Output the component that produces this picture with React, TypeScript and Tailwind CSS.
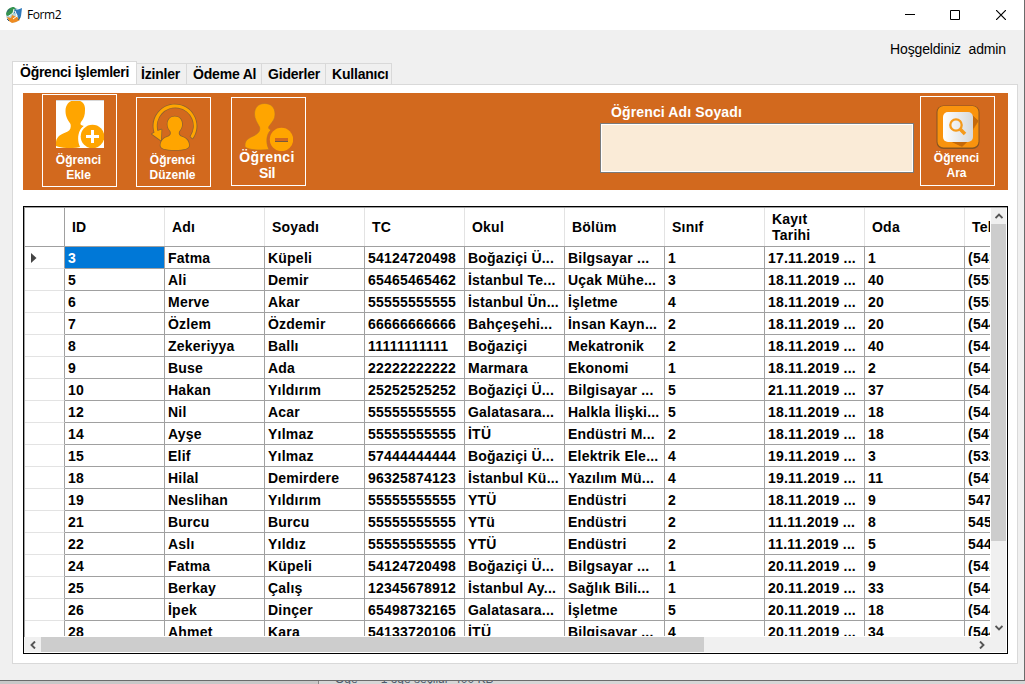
import type { ReactNode } from "react";

const columns = ["ID", "Adı", "Soyadı", "TC", "Okul", "Bölüm", "Sınıf", "Kayıt Tarihi", "Oda", "Tele"];

const rows: string[][] = [
  ["3", "Fatma", "Küpeli", "54124720498", "Boğaziçi Ü...", "Bilgsayar ...", "1", "17.11.2019 ...", "1", "(541"],
  ["5", "Ali", "Demir", "65465465462", "İstanbul Te...", "Uçak Mühe...", "3", "18.11.2019 ...", "40", "(555"],
  ["6", "Merve", "Akar", "55555555555", "İstanbul Ün...", "İşletme", "4", "18.11.2019 ...", "20", "(555"],
  ["7", "Özlem", "Özdemir", "66666666666", "Bahçeşehi...", "İnsan Kayn...", "2", "18.11.2019 ...", "20", "(544"],
  ["8", "Zekeriyya", "Ballı", "11111111111", "Boğaziçi", "Mekatronik", "2", "18.11.2019 ...", "40", "(544"],
  ["9", "Buse", "Ada", "22222222222", "Marmara", "Ekonomi", "1", "18.11.2019 ...", "2", "(544"],
  ["10", "Hakan", "Yıldırım", "25252525252", "Boğaziçi Ü...", "Bilgisayar ...", "5", "21.11.2019 ...", "37", "(544"],
  ["12", "Nil", "Acar", "55555555555", "Galatasara...", "Halkla İlişki...", "5", "18.11.2019 ...", "18", "(544"],
  ["14", "Ayşe", "Yılmaz", "55555555555", "İTÜ", "Endüstri M...", "2", "18.11.2019 ...", "18", "(547"],
  ["15", "Elif", "Yılmaz", "57444444444", "Boğaziçi Ü...", "Elektrik Ele...", "4", "19.11.2019 ...", "3", "(532"],
  ["18", "Hilal", "Demirdere", "96325874123", "İstanbul Kü...", "Yazılım Mü...", "4", "19.11.2019 ...", "11", "(547"],
  ["19", "Neslihan", "Yıldırım", "55555555555", "YTÜ", "Endüstri", "2", "18.11.2019 ...", "9", "547"],
  ["21", "Burcu", "Burcu", "55555555555", "YTü", "Endüstri", "2", "11.11.2019 ...", "8", "545"],
  ["22", "Aslı", "Yıldız", "55555555555", "YTÜ", "Endüstri", "2", "11.11.2019 ...", "5", "544"],
  ["24", "Fatma", "Küpeli", "54124720498", "Boğaziçi Ü...", "Bilgsayar ...", "1", "20.11.2019 ...", "9", "(541"],
  ["25", "Berkay", "Çalış", "12345678912", "İstanbul Ay...", "Sağlık Bili...", "1", "20.11.2019 ...", "33", "(544"],
  ["26", "İpek", "Dinçer", "65498732165", "Galatasara...", "İşletme", "5", "20.11.2019 ...", "18", "(544"],
  ["28", "Ahmet", "Kara", "54133720106", "İTÜ", "Bilgisayar ...", "4", "20.11.2019 ...", "34", "(544"],
];

function TitleBar() {
  return (
    <header className="flex h-[30px] shrink-0 items-center bg-white pl-[6px]">
      <svg width="16" height="16" viewBox="0 0 16 16">
        <circle cx="7.5" cy="8" r="7.500" fill="#b5d5dd" />
        <path d="M0 7C1 2 4 0 8 0l2 2-2 2-1 3-3 1-3 1z" fill="#35934f" />
        <path d="M9 2l2 1 5-2-1 8-2 4-2-6-3-1z" fill="#2d78bb" />
        <path d="M1 10l4 1 1-3 5 2 3 3-4 2-4 1-3-2z" fill="#ee8b22" />
        <path d="M3 9l4-3 1-4M9 4l2 5-4 3" fill="none" stroke="#fff" strokeWidth="1" />
        <path d="M1 5l3-3M1 12l2 2M12 13l2-3" stroke="#37617c" strokeWidth="1" />
      </svg>
      <h1 className="ml-[5px] font-['Open_Sans','Noto_Sans',sans-serif] text-[12px] leading-[16px] tracking-[-0.4px] text-black">Form2</h1>
      <div className="ml-auto flex items-center pr-[18px]">
        <svg className="mr-[35px]" width="10" height="10"><path d="M0 4.5h10" stroke="#000" /></svg>
        <svg className="mr-[36px]" width="10" height="10"><path d="M.5 .5h9v9h-9z" fill="none" stroke="#000" /></svg>
        <svg width="10" height="10"><path d="M0 0l10 10M10 0L0 10" stroke="#000" strokeWidth="1.2" /></svg>
      </div>
    </header>
  );
}

function Tabs() {
  return (
    <nav className="flex items-end pl-[12px] text-[14px] font-bold leading-[16px] tracking-[-0.2px]">
      <div className="-mb-px flex h-[24px] w-[125px] items-start whitespace-nowrap border border-b-0 border-[#d9d9d9] bg-white pl-[7px] pt-[2px] tracking-[-0.26px]">Öğrenci İşlemleri</div>
      <div className="flex h-[21px] w-[50px] items-center whitespace-nowrap border-r border-t border-[#d9d9d9] pl-[4px]">İzinler</div>
      <div className="flex h-[21px] w-[75px] items-center whitespace-nowrap border-r border-t border-[#d9d9d9] pl-[6px]">Ödeme Al</div>
      <div className="flex h-[21px] w-[64px] items-center whitespace-nowrap border-r border-t border-[#d9d9d9] pl-[6px]">Giderler</div>
      <div className="flex h-[21px] w-[66px] items-center whitespace-nowrap border-r border-t border-[#d9d9d9] pl-[6px]">Kullanıcı</div>
    </nav>
  );
}

function AddIcon() {
  return (
    <svg width="48" height="48" viewBox="0 0 48 48" className="bg-white">
      <path d="M19.500 0C13 0 9.500 5 9.500 11c0 6 3 10 5 13 1 5-1 7-5 8.500C3 35 0 38 0 43v3c5 2 15 3 24 1C20 38 23 29 28 26c-4-1-4-2-3-4 3-4 4-7 4-12C29.500 4 26 0 19.500 0z" fill="#ffa500" />
      <circle cx="36.500" cy="36.500" r="13.600" fill="#fff" />
      <circle cx="36.500" cy="36.500" r="11.800" fill="#ffa500" />
      <path d="M36.500 30v13M30 36.500h13" stroke="#fff" strokeWidth="3" />
      <path d="M0 .5h48" stroke="#d8d8d8" />
    </svg>
  );
}

const arrowArc = "M42.500 36.500A21.500 21.500 0 1 0 4.500 30.500L2 32l9 6.500L11.500 27.500 7.500 29A18.500 18.500 0 1 1 40.500 34.500z";
const bust = "M24.800 14.500c-4.800 0-7.300 3.500-7.300 8 0 3 1.500 5 3 7 1 3-.5 4.500-3.500 5.500-4 1.300-6.500 4.500-6.500 8.500 0 3 4.500 4.500 14.300 4.500s14.300-1.500 14.300-4.500c0-4-2.500-7.200-6.500-8.500-3-1-4.500-2.500-3.500-5.500 1.500-2 3-4 3-7 0-4.500-2.500-8-7.300-8z";

function EditIcon() {
  return (
    <svg width="48" height="49" viewBox="0 0 48 49">
      <g stroke="#8f6230" strokeWidth="1.600" strokeLinejoin="round" fill="#8f6230">
        <path d={arrowArc} />
        <path d={bust} />
      </g>
      <g fill="#ffa500">
        <path d={arrowArc} />
        <path d={bust} />
      </g>
    </svg>
  );
}

function RemoveIcon() {
  return (
    <svg width="48" height="48" viewBox="0 0 48 48">
      <path d="M19.500.5c-6 0-10 4-10 10.500 0 5 3 9 5 13 1 4-1 6-5 8.500C4 35 0 37 0 42v2c4 3 14 3.500 24 2.500C20 39 22 30 26 27c-3-1-3-3-1-5 3-4 5-6 5-11 0-6.500-4-10.500-10.500-10.500z" fill="#ffa500" stroke="#b8702a" strokeWidth=".6" />
      <circle cx="36.500" cy="36.500" r="13.500" fill="#d2691e" />
      <circle cx="36.500" cy="36.500" r="11.700" fill="#ffa500" />
      <path d="M30 36.500h13" stroke="#d2691e" strokeWidth="3" />
      <path d="M30 38.500h13" stroke="#785a3c" />
    </svg>
  );
}

function SearchIcon() {
  return (
    <svg width="44" height="44" viewBox="0 0 44 44">
      <defs>
        <linearGradient id="tile" x2="1"><stop stopColor="#fff" /><stop offset="1" stopColor="#d5d8da" /></linearGradient>
        <linearGradient id="fade" x2="1" y2="1"><stop stopColor="#a95500" /><stop offset="1" stopColor="#e08010" /></linearGradient>
      </defs>
      <rect x=".5" y=".5" width="43" height="43.500" rx="7" fill="#875523" />
      <rect x="1.500" y="1" width="41" height="41.500" rx="6" fill="#f9930d" />
      <path d="M36 10l6.500 6-6 10zM26 42L14 36h18z" fill="url(#fade)" />
      <path d="M42.500 16L26 42 20 36 36 20z" fill="#f08c0c" />
      <path d="M36 10l6.500 6-5.500 8z" fill="#c4690a" />
      <path d="M14 36h18l-6 5.500z" fill="#c4690a" />
      <rect x="7" y="7" width="30" height="30" rx="5" fill="url(#tile)" />
      <circle cx="20" cy="20" r="5.700" fill="none" stroke="#f59a1b" strokeWidth="2.300" />
      <path d="M24 24l5 5" stroke="#f59a1b" strokeWidth="3.500" />
    </svg>
  );
}

function Label({ children, className }: { children: ReactNode; className: string }) {
  return <span className={`block text-center font-bold text-white ${className}`}>{children}</span>;
}

const boxed = "flex w-[75px] shrink-0 flex-col items-center border border-white";

function Toolbar() {
  return (
    <div className="flex h-[97px] w-[985px] items-start bg-[#d2691e] pl-[19px]">
      <button className={`${boxed} mt-px h-[93px] pl-px pt-[5px]`}>
        <AddIcon />
        <Label className="mt-[5px] w-[60px] pr-[3px] text-[12px] leading-[15px]">Öğrenci Ekle</Label>
      </button>
      <button className={`${boxed} ml-[19px] mt-[4px] h-[90px] pl-px pt-[4px]`}>
        <EditIcon />
        <Label className="mt-[2px] w-[60px] pr-[3px] text-[12px] leading-[15px]">Öğrenci Düzenle</Label>
      </button>
      <button className={`${boxed} ml-[20px] mt-[4px] h-[89px] pl-px pt-[5px]`}>
        <RemoveIcon />
        <Label className="-mt-[2px] w-[64px] pr-[4px] text-[14px] leading-[16px] tracking-[0.4px]">Öğrenci <span className="tracking-[-0.3px]">Sil</span></Label>
      </button>
      <label className="ml-auto w-[314px]">
        <span className="block pl-[11px] pt-[11px] text-[14px] font-bold leading-[16px] tracking-[0.13px] text-white">Öğrenci Adı Soyadı</span>
        <input className="mt-[3px] block h-[50px] w-[314px] border border-[#7a7a7a] bg-[#faebd7] shadow-[inset_0_0_0_1px_#fff] outline-none" />
      </label>
      <button className={`${boxed} ml-[6px] mr-[13px] mt-[3px] h-[90px] pl-px pt-[8px]`}>
        <SearchIcon />
        <Label className="mt-[2px] w-[56px] pr-[3px] text-[12px] leading-[15px]">Öğrenci Ara</Label>
      </button>
    </div>
  );
}

function Chevron({ d }: { d: string }) {
  return <svg width="8" height="8" viewBox="0 0 8 8"><path d={d} fill="none" stroke="#555" strokeWidth="1.900" /></svg>;
}

function Grid() {
  return (
    <div className="mt-[16px] flex h-[448px] w-[985px] flex-col border border-black bg-white">
      <div className="flex h-[430px] border-l border-t border-[#a0a0a0]">
        <div className="h-[428px] w-[965px] overflow-hidden text-[14px] font-bold leading-[16px] tracking-[0.22px]">
          <div className="flex h-[39px] w-[1040px] border-b border-[#a0a0a0]">
            <div className="w-[40px] shrink-0 border-r border-[#a0a0a0]" />
            {columns.map((name) => (
              <div key={name} className="flex w-[100px] shrink-0 items-center border-r border-[#e3e3e3] pl-[7px] pr-[35px]">{name}</div>
            ))}
          </div>
          {rows.map((row, index) => (
            <div key={row[0]} className="flex h-[22px] w-[1040px]">
              <div className="flex w-[40px] shrink-0 items-center border-b border-r border-b-[#e3e3e3] border-r-[#a0a0a0] pl-[6px]">
                {index === 0 && <svg width="6" height="10"><path d="M0 0l5.500 5L0 10z" fill="#444" /></svg>}
              </div>
              {row.map((value, column) => (
                <div
                  key={column}
                  className={`w-[100px] shrink-0 whitespace-nowrap border-b border-r border-[#a0a0a0] pl-[3px] pt-[3px] ${index === 0 && column === 0 ? "bg-[#0078d7] text-white" : ""}`}
                >
                  {value}
                </div>
              ))}
            </div>
          ))}
        </div>
        <div className="ml-px flex w-[15px] flex-col items-center bg-[#f0f0f0]">
          <div className="flex h-[16px] items-center"><Chevron d="M.5 6L4 2.500 7.500 6" /></div>
          <div className="h-[317px] w-[15px] bg-[#cdcdcd]" />
          <div className="mt-auto flex h-[19px] items-center"><Chevron d="M.5 2L4 5.500 7.500 2" /></div>
        </div>
      </div>
      <div className="flex h-[15px] w-[982px] items-center bg-[#f0f0f0]">
        <div className="flex w-[17px] justify-center"><Chevron d="M6 .5L2.500 4 6 7.500" /></div>
        <div className="h-[15px] w-[663px] bg-[#cdcdcd]" />
        <div className="ml-auto mr-[16px] flex w-[17px] justify-center"><Chevron d="M2 .5L5.500 4 2 7.500" /></div>
      </div>
    </div>
  );
}

export default function App() {
  return (
    <div className="flex h-[684px] w-[1025px] flex-col overflow-hidden bg-[#c9c9c9] font-['Liberation_Sans',Arial,sans-serif] text-black">
      <main className="flex h-[681px] shrink-0 flex-col border-b border-r border-[#6b6b6b] bg-[#f0f0f0]">
        <TitleBar />
        <div className="flex h-[31px] shrink-0 justify-end pr-[18px] pt-[11px] text-[14px] leading-[16px]">
          <p className="whitespace-pre tracking-[-0.13px]">Hoşgeldiniz  admin</p>
        </div>
        <Tabs />
        <section className="ml-[12px] h-[580px] w-[1006px] border border-[#d9d9d9] bg-white pl-[10px] pt-[8px]">
          <Toolbar />
          <Grid />
        </section>
      </main>
      <footer className="flex h-[3px] shrink-0 bg-[#d6d6d6]">
        <div className="w-[319px] border-r border-[#888] bg-[#c8c8c8]" />
        <div className="flex h-[3px] items-end gap-[23px] overflow-hidden pl-[16px] text-[12px] leading-[12px] text-[#4c596b]">
          <span className="-mb-px">Öğe</span>
          <span className="-mb-px">1 öğe seçildi&nbsp; 400 KB</span>
        </div>
      </footer>
    </div>
  );
}
